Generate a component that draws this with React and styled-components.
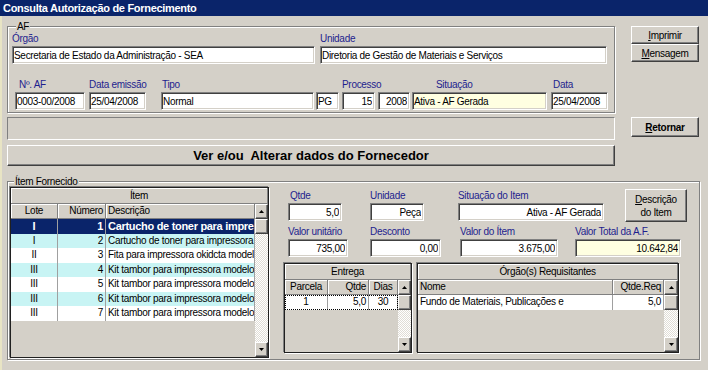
import React from "react";
import styled, { createGlobalStyle } from "styled-components";

const GlobalStyle = createGlobalStyle`
    html, body {
        margin: 0;
        padding: 0;
        background: #d4d0c8;
    }
    body {
        font-family: "Liberation Sans", Arial, sans-serif;
        font-size: 10px;
        letter-spacing: -0.3px;
        color: #000000;
    }
`;

const Window = styled.div`
    width: 708px;
    height: 370px;
    background: #d4d0c8;
    overflow: hidden;
    display: flex;
    flex-direction: column;
`;

const TitleBar = styled.div`
    height: 16px;
    line-height: 16px;
    padding-left: 3px;
    background: #0a246a;
    color: #ffffff;
    font-weight: bold;
    font-size: 11px;
    letter-spacing: -0.3px;
    white-space: nowrap;
`;

const Body = styled.div`
    flex: 1;
    border-left: 2px solid #e8e4c4;
    padding-top: 5px;
    display: flex;
    flex-direction: column;
`;

const TopArea = styled.div`
    display: flex;
    align-items: flex-start;
`;

const LeftCol = styled.div`
    width: 608px;
    margin-left: 5px;
    display: flex;
    flex-direction: column;
`;

const RightCol = styled.div`
    width: 68px;
    margin-left: 16px;
    display: flex;
    flex-direction: column;
    padding-top: 5px;
`;

const Group = styled.fieldset`
    margin: ${p => p.$mt || 0}px 0 0 ${p => p.$ml || 0}px;
    padding: 0 0 ${p => p.$pb || 1}px ${p => p.$pl || 4}px;
    border: 1px solid #808080;
    box-shadow: inset 1px 1px 0 #ffffff, 1px 1px 0 #ffffff;
    min-width: 0;
    width: ${p => p.$w}px;
    box-sizing: border-box;
    height: ${p => (p.$h ? p.$h + "px" : "auto")};
`;

const Legend = styled.legend`
    padding: 0 1px;
    margin-left: 4px;
    line-height: 11px;
    background: #d4d0c8;
`;

const FieldRow = styled.div`
    display: flex;
    align-items: flex-start;
    margin-top: ${p => p.$mt || 0}px;
`;

const Field = styled.div`
    display: flex;
    flex-direction: column;
    width: ${p => p.$w}px;
    margin-left: ${p => p.$ml || 0}px;
`;

const Label = styled.div`
    height: 13px;
    line-height: 13px;
    margin-bottom: 1px;
    padding-left: ${p => p.$indent || 0}px;
    color: #1e1e8e;
    white-space: nowrap;
`;

const TextBox = styled.input`
    box-sizing: border-box;
    width: 100%;
    height: 18px;
    margin: 0;
    padding: 0 2px 0 1px;
    font: inherit;
    letter-spacing: inherit;
    color: #000000;
    text-align: ${p => p.$align || "left"};
    background: ${p => (p.$yellow ? "#ffffe1" : "#ffffff")};
    border: 1px solid;
    border-color: #808080 #ffffff #ffffff #808080;
    box-shadow: inset 1px 1px 0 #404040, inset -1px -1px 0 #d4d0c8;
    outline: none;
`;

const Btn = styled.button`
    box-sizing: border-box;
    width: ${p => (p.$w ? p.$w + "px" : "100%")};
    height: ${p => p.$h}px;
    margin: ${p => p.$mt || 0}px 0 0 ${p => p.$ml || 0}px;
    padding: 0;
    font: inherit;
    letter-spacing: inherit;
    font-size: ${p => p.$size || 10}px;
    font-weight: ${p => (p.$bold ? "bold" : "normal")};
    line-height: 13px;
    color: #000000;
    background: #d4d0c8;
    border: 1px solid;
    border-color: #ffffff #404040 #404040 #ffffff;
    box-shadow: inset -1px -1px 0 #808080, inset 1px 1px 0 #d4d0c8;
    white-space: pre;
    cursor: default;
`;

const WideBtn = styled(Btn)`
    letter-spacing: 0;
`;

const StatusPanel = styled.div`
    height: 23px;
    margin-top: 4px;
    box-sizing: border-box;
    border: 1px solid;
    border-color: #808080 #ffffff #ffffff #808080;
`;

const ItemArea = styled.div`
    display: flex;
    align-items: flex-start;
`;

const DetailCol = styled.div`
    margin-left: 15px;
    width: 403px;
    display: flex;
    flex-direction: column;
`;

/* grid */

const GridFrame = styled.div`
    box-sizing: border-box;
    width: ${p => p.$w}px;
    height: ${p => p.$h}px;
    margin-left: ${p => p.$ml || 0}px;
    border: 1px solid #202020;
    box-shadow: -1px -1px 0 #808080, 1px 1px 0 #ffffff;
    background: #d4d0c8;
    display: flex;
    flex-direction: column;
    overflow: hidden;
`;

const GridCaption = styled.div`
    height: 16px;
    line-height: 15px;
    box-sizing: border-box;
    text-align: center;
    border-bottom: 1px solid #808080;
    border-right: 1px solid #808080;
    box-shadow: inset 1px 1px 0 #ffffff;
`;

const GridBody = styled.div`
    flex: 1;
    display: flex;
    min-height: 0;
`;

const GridTable = styled.div`
    flex: 1;
    display: flex;
    flex-direction: column;
`;

const HeadRow = styled.div`
    display: flex;
    height: 15px;
`;

const HeadCell = styled.div`
    box-sizing: border-box;
    width: ${p => p.$w}px;
    line-height: 14px;
    padding: 0 2px;
    text-align: ${p => p.$align || "left"};
    border-right: 1px solid #808080;
    border-bottom: 1px solid #808080;
    box-shadow: inset 1px 1px 0 #ffffff;
    white-space: nowrap;
    overflow: hidden;
`;

const Row = styled.div`
    display: flex;
    height: 14.5px;
    background: ${p => (p.$sel ? "#0a246a" : p.$alt ? "#c8f4f4" : "#ffffff")};
    color: ${p => (p.$sel ? "#ffffff" : "#000000")};
    font-weight: ${p => (p.$sel ? "bold" : "normal")};
    font-size: ${p => (p.$sel ? 11 : 10)}px;
    outline: ${p => (p.$focus ? "1px dotted #000000" : "none")};
    outline-offset: -1px;
`;

const Cell = styled.div`
    box-sizing: border-box;
    width: ${p => p.$w}px;
    line-height: 14px;
    padding: 0 2px;
    text-align: ${p => p.$align || "left"};
    border-right: 1px solid #a0a0a0;
    white-space: nowrap;
    overflow: hidden;
`;

const ScrollBar = styled.div`
    width: ${p => p.$w}px;
    display: flex;
    flex-direction: column;
    background-color: #ece9e2;
    background-image: repeating-conic-gradient(#ffffff 0 25%, #e0ddd6 0 50%);
    background-size: 2px 2px;
`;

const ScrollBtn = styled.div`
    box-sizing: border-box;
    height: ${p => p.$h || 15}px;
    background: #d4d0c8;
    border: 1px solid;
    border-color: #ffffff #404040 #404040 #ffffff;
    box-shadow: inset -1px -1px 0 #808080;
    display: flex;
    align-items: center;
    justify-content: center;
`;

const ScrollTrack = styled.div`
    flex: 1;
`;

const Key = styled.span`
    text-decoration: underline;
`;

const Arrow = ({down}) => (
    <svg width="5" height="3" viewBox="0 0 5 3">
        <path d={down ? "M0 0H5L2.5 3Z" : "M0 3H5L2.5 0Z"} fill="#000" />
    </svg>
);

const DataGrid = ({title, w, h, ml, cols, rows, sb}) => (
    <GridFrame $w={w} $h={h} $ml={ml}>
        <GridCaption>{title}</GridCaption>
        <GridBody>
            <GridTable>
                <HeadRow>
                    {cols.map(c => (
                        <HeadCell key={c.label} $w={c.w} $align={c.align}>
                            {c.label}
                        </HeadCell>
                    ))}
                </HeadRow>
                {rows.map((r, i) => (
                    <Row key={i} $sel={r.sel} $alt={r.alt} $focus={r.focus}>
                        {r.cells.map((v, j) => (
                            <Cell key={j} $w={cols[j].w} $align={cols[j].align}>
                                {v}
                            </Cell>
                        ))}
                    </Row>
                ))}
            </GridTable>
            <ScrollBar $w={sb}>
                <ScrollBtn>
                    <Arrow />
                </ScrollBtn>
                <ScrollBtn />
                <ScrollTrack />
                <ScrollBtn>
                    <Arrow down />
                </ScrollBtn>
            </ScrollBar>
        </GridBody>
    </GridFrame>
);

const itemCols = [
    {label: "Lote", w: 47, align: "center"},
    {label: "Número", w: 48, align: "right"},
    {label: "Descrição", w: 149, align: "left"}
];

const itemRows = [
    {cells: ["I", "1", "Cartucho de toner para impressora"], sel: true},
    {cells: ["I", "2", "Cartucho de toner para impressora"], alt: true},
    {cells: ["II", "3", "Fita para impressora okidcta modelo"]},
    {cells: ["III", "4", "Kit tambor para impressora modelo"], alt: true},
    {cells: ["III", "5", "Kit tambor para impressora modelo"]},
    {cells: ["III", "6", "Kit tambor para impressora modelo"], alt: true},
    {cells: ["III", "7", "Kit tambor para impressora modelo"]}
];

const entregaCols = [
    {label: "Parcela", w: 43, align: "center"},
    {label: "Qtde", w: 41, align: "right"},
    {label: "Dias", w: 29, align: "center"}
];

const orgaoCols = [
    {label: "Nome", w: 195, align: "left"},
    {label: "Qtde.Req", w: 51, align: "right"}
];

const App = () => {
    return (
        <Window>
            <GlobalStyle />
            <TitleBar>Consulta Autorização de Fornecimento</TitleBar>
            <Body>
                <TopArea>
                    <LeftCol>
                        <Group $w={608} $pb={2}>
                            <Legend>AF</Legend>
                            <FieldRow>
                                <Field $w={303}>
                                    <Label>Órgão</Label>
                                    <TextBox readOnly value="Secretaria de Estado da Administração - SEA" />
                                </Field>
                                <Field $w={287} $ml={5}>
                                    <Label>Unidade</Label>
                                    <TextBox readOnly value="Diretoria de Gestão de Materiais e Serviços" />
                                </Field>
                            </FieldRow>
                            <FieldRow $mt={14}>
                                <Field $w={70} $ml={3}>
                                    <Label $indent={4}>Nº. AF</Label>
                                    <TextBox readOnly value="0003-00/2008" />
                                </Field>
                                <Field $w={57} $ml={4}>
                                    <Label>Data emissão</Label>
                                    <TextBox readOnly value="25/04/2008" />
                                </Field>
                                <Field $w={153} $ml={15}>
                                    <Label $indent={1}>Tipo</Label>
                                    <TextBox readOnly value="Normal" />
                                </Field>
                                <Field $w={23} $ml={2}>
                                    <Label />
                                    <TextBox readOnly value="PG" />
                                </Field>
                                <Field $w={33} $ml={3}>
                                    <Label>Processo</Label>
                                    <TextBox readOnly value="15" $align="right" />
                                </Field>
                                <Field $w={32} $ml={3}>
                                    <Label />
                                    <TextBox readOnly value="2008" $align="right" />
                                </Field>
                                <Field $w={135} $ml={2}>
                                    <Label $indent={24}>Situação</Label>
                                    <TextBox readOnly value="Ativa - AF Gerada" $yellow />
                                </Field>
                                <Field $w={57} $ml={4}>
                                    <Label $indent={2}>Data</Label>
                                    <TextBox readOnly value="25/04/2008" />
                                </Field>
                            </FieldRow>
                        </Group>
                        <StatusPanel />
                        <WideBtn $h={21} $mt={5} $bold $size={13}>
                            {"Ver e/ou  Alterar dados do Fornecedor"}
                        </WideBtn>
                    </LeftCol>
                    <RightCol>
                        <Btn $h={18}>
                            <Key>I</Key>mprimir
                        </Btn>
                        <Btn $h={18}>
                            <Key>M</Key>ensagem
                        </Btn>
                        <Btn $h={20} $mt={55} $bold>
                            <Key>R</Key>etornar
                        </Btn>
                    </RightCol>
                </TopArea>
                <Group $w={693} $mt={10} $ml={5} $pl={2} $h={184}>
                    <Legend>Ítem Fornecido</Legend>
                    <ItemArea>
                        <DataGrid
                            title="Ítem"
                            w={259}
                            h={171}
                            cols={itemCols}
                            rows={itemRows}
                            sb={13}
                        />
                        <DetailCol>
                            <FieldRow $mt={2}>
                                <Field $w={54} $ml={4}>
                                    <Label $indent={2}>Qtde</Label>
                                    <TextBox readOnly value="5,0" $align="right" />
                                </Field>
                                <Field $w={54} $ml={28}>
                                    <Label>Unidade</Label>
                                    <TextBox readOnly value="Peça" $align="right" />
                                </Field>
                                <Field $w={146} $ml={34}>
                                    <Label>Situação do Item</Label>
                                    <TextBox readOnly value="Ativa - AF Gerada" $align="right" />
                                </Field>
                                <Btn $w={62} $h={33} $ml={21}>
                                    <Key>D</Key>escrição{"\n"}do Item
                                </Btn>
                            </FieldRow>
                            <FieldRow $mt={3}>
                                <Field $w={60} $ml={4}>
                                    <Label>Valor unitário</Label>
                                    <TextBox readOnly value="735,00" $align="right" />
                                </Field>
                                <Field $w={71} $ml={22}>
                                    <Label>Desconto</Label>
                                    <TextBox readOnly value="0,00" $align="right" />
                                </Field>
                                <Field $w={98} $ml={19}>
                                    <Label>Valor do Ítem</Label>
                                    <TextBox readOnly value="3.675,00" $align="right" />
                                </Field>
                                <Field $w={106} $ml={17}>
                                    <Label>Valor Total da A.F.</Label>
                                    <TextBox readOnly value="10.642,84" $align="right" $yellow />
                                </Field>
                            </FieldRow>
                            <FieldRow $mt={6}>
                                <DataGrid
                                    title="Entrega"
                                    w={128}
                                    h={90}
                                    cols={entregaCols}
                                    rows={[{cells: ["1", "5,0", "30"], focus: true}]}
                                    sb={13}
                                />
                                <DataGrid
                                    title="Órgão(s) Requisitantes"
                                    w={262}
                                    h={90}
                                    ml={5}
                                    cols={orgaoCols}
                                    rows={[{cells: ["Fundo de Materiais, Publicações e", "5,0"]}]}
                                    sb={14}
                                />
                            </FieldRow>
                        </DetailCol>
                    </ItemArea>
                </Group>
            </Body>
        </Window>
    );
};

export default App;
